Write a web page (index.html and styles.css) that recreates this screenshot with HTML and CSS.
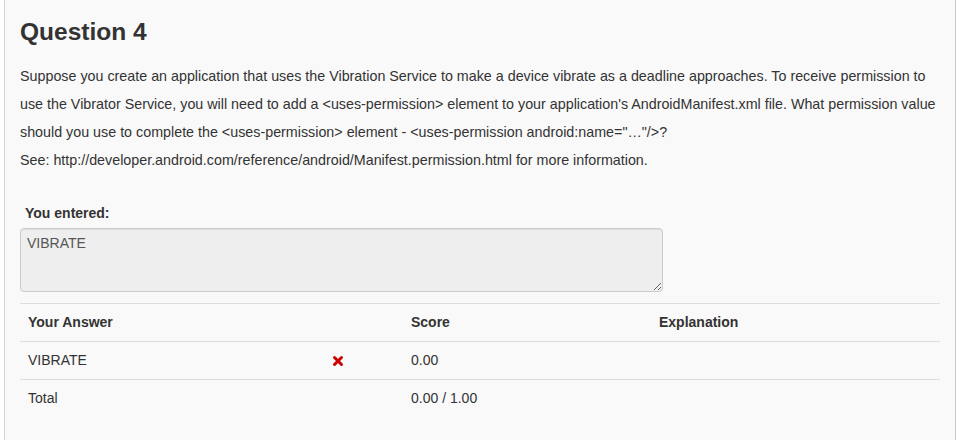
FILE: index.html
```html
<!DOCTYPE html>
<html>
<head>
<meta charset="utf-8">
<link rel="stylesheet" href="styles.css">
</head>
<body>
<div class="page">
  <h3 class="title">Question 4</h3>
  <p class="question">Suppose you create an application that uses the Vibration Service to make a device vibrate as a deadline approaches. To receive permission to use the Vibrator Service, you will need to add a &lt;uses-permission&gt; element to your application's AndroidManifest.xml file. What permission value should you use to complete the &lt;uses-permission&gt; element - &lt;uses-permission android:name="…"/&gt;?<br>See: http://developer.android.com/reference/android/Manifest.permission.html for more information.</p>
  <div class="entered">
    <label class="entered-label">You entered:</label>
    <textarea class="entered-box" disabled>VIBRATE</textarea>
  </div>
  <div class="results">
    <div class="row head">
      <div class="cell">Your Answer</div>
      <div class="cell"></div>
      <div class="cell">Score</div>
      <div class="cell">Explanation</div>
    </div>
    <div class="row">
      <div class="cell">VIBRATE</div>
      <div class="cell"><svg class="cross" width="12" height="12" viewBox="0 0 12 12"><path d="M2.5 2.5 L9.5 9.5 M9.5 2.5 L2.5 9.5" stroke="#c00" stroke-width="3" stroke-linecap="round"/></svg></div>
      <div class="cell">0.00</div>
      <div class="cell"></div>
    </div>
    <div class="row">
      <div class="cell">Total</div>
      <div class="cell"></div>
      <div class="cell">0.00 / 1.00</div>
      <div class="cell"></div>
    </div>
  </div>
</div>
</body>
</html>
```

FILE: styles.css
```css
html, body {
  margin: 0;
  padding: 0;
  background: #fff;
}
body {
  font-family: "Liberation Sans", Arial, sans-serif;
  font-size: 14px;
  color: #333;
}
.page {
  margin-left: 4px;
  width: 952px;
  height: 440px;
  box-sizing: border-box;
  background: #f9f9f9;
  border-left: 1px solid #d4d4d4;
  border-right: 1px solid #c8c8c8;
  padding: 0 15px;
}
.title {
  margin: 0;
  padding-top: 12px;
  font-size: 24.5px;
  line-height: 40px;
  font-weight: bold;
  color: #333;
}
.question {
  margin: 10px 0 0;
  font-size: 14.3px;
  line-height: 28px;
}
.entered {
  margin-top: 29px;
}
.entered-label {
  display: block;
  font-weight: bold;
  font-size: 14px;
  line-height: 20px;
  padding-left: 5px;
  margin-bottom: 5px;
}
.entered-box {
  display: block;
  box-sizing: border-box;
  width: 643px;
  height: 64px;
  margin: 0;
  padding: 4px 6px;
  border: 1px solid #ccc;
  border-radius: 4px;
  background: #eee;
  color: #555;
  font-family: "Liberation Sans", Arial, sans-serif;
  font-size: 14px;
  line-height: 20px;
  box-shadow: inset 0 1px 1px rgba(0,0,0,0.075);
}
.results {
  margin-top: 11px;
  width: 920px;
}
.row {
  display: grid;
  grid-template-columns: 304px 79px 248px 1fr;
  border-top: 1px solid #ddd;
}
.cell {
  padding: 8px;
  line-height: 21px;
  height: 21px;
}
.head .cell {
  font-weight: bold;
}
.cross {
  display: block;
  margin-top: 5px;
}
```
